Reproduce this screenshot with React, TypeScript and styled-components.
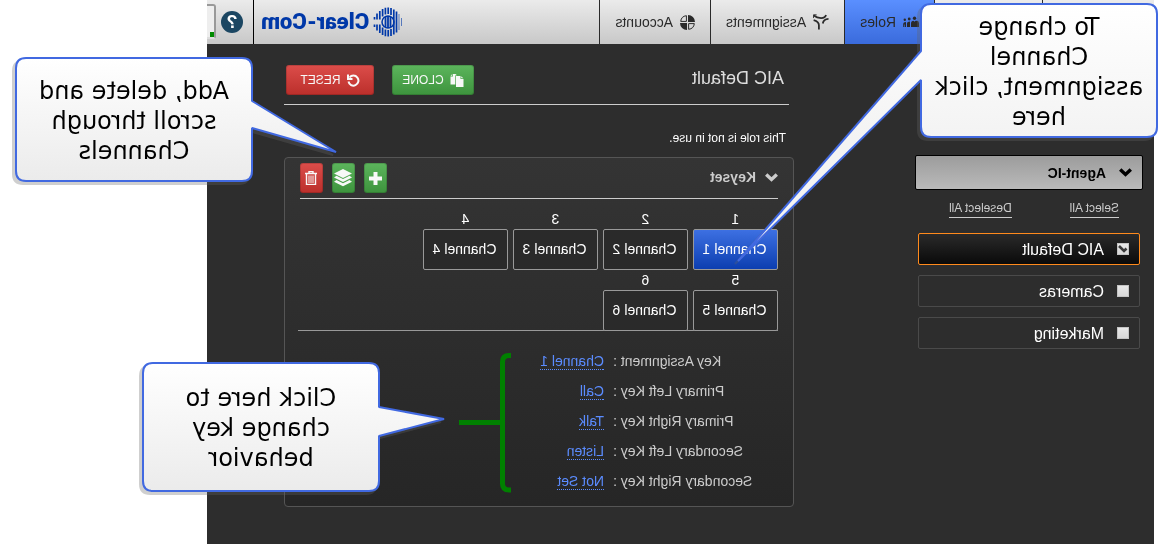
import React from "react";
import styled, { createGlobalStyle } from "styled-components";

const sans = `"Liberation Sans", Arial, sans-serif`;

const GlobalStyle = createGlobalStyle`
  * { box-sizing: border-box; }
  body { margin: 0; background: #fff; font-family: ${sans}; font-size: 14px; }
  button, input { font-family: inherit; }
`;

/* The whole page is shown mirrored, left to right. */
const Page = styled.div`
  transform: scaleX(-1);
  min-height: 100vh;
  padding: 0 207px 0 14px;
  overflow: hidden;
`;

const Shell = styled.div`
  position: relative;
  min-height: 100vh;
  background: #2d2d2d;
  color: #fff;
`;

const Header = styled.header`
  display: flex;
  height: 44px;
  background: linear-gradient(#ebebeb, #c8c8c8);
  overflow: hidden;
`;

const Nav = styled.nav`
  display: flex;
  flex: 1;
`;

const Tab = styled.a<{ $active?: boolean; $width: number }>`
  display: flex;
  align-items: center;
  gap: 7px;
  width: ${(p) => p.$width}px;
  padding: 0 15px;
  border-right: 1px solid #2a2a2a;
  background: ${(p) => (p.$active ? "linear-gradient(#5a8fff, #3a6bdc)" : "none")};
  color: #2a2a2a;
  text-decoration: none;
  white-space: nowrap;
`;

const Brand = styled.div`
  display: flex;
  align-items: center;
  gap: 4px;
  padding-right: 7px;
  color: #0038a8;
  font: 900 22px/44px Roboto, ${sans};
`;

const HelpArea = styled.div`
  display: flex;
  align-items: center;
  gap: 5px;
  width: 47px;
  padding-left: 10px;
  border-left: 1px solid #000;
  overflow: hidden;
`;

const HelpButton = styled.button`
  flex: none;
  width: 22px;
  height: 22px;
  padding: 0;
  border: 0;
  border-radius: 50%;
  background: #1b4662;
  color: #fff;
  font-size: 18px;
  font-weight: bold;
  line-height: 22px;
`;

const Meter = styled.div`
  flex: none;
  display: flex;
  align-items: flex-end;
  width: 30px;
  height: 35px;
  margin-bottom: 1px;
  border: 2px solid #999;
  border-bottom-color: #ddd;
  border-radius: 3px;
  background: #eee;
`;

const MeterBar = styled.span`
  width: 4px;
  height: 5px;
  background: #008a00;
`;

const Body = styled.div`
  display: flex;
  align-items: flex-start;
  gap: 121px;
  padding: 0 77px 37px 11px;
`;

const Sidebar = styled.aside`
  flex: none;
  width: 228px;
  padding-top: 111px;
`;

const GroupButton = styled.button`
  display: flex;
  align-items: center;
  gap: 13px;
  width: 100%;
  height: 35px;
  padding: 0 10px;
  border: 1px solid #000;
  border-radius: 2px;
  background: linear-gradient(#9c9c9c, #bababa);
  color: #000;
  font-size: 14px;
  font-weight: bold;
`;

const SelectLinks = styled.div`
  display: flex;
  justify-content: space-between;
  padding: 10px 34px 15px 24px;
`;

const SelectLink = styled.a`
  border-bottom: 1px solid #ccc;
  color: #ccc;
  font-size: 12px;
  line-height: 17px;
  text-decoration: none;
`;

const RoleList = styled.div`
  display: flex;
  flex-direction: column;
  gap: 10px;
  padding: 0 3px;
`;

const RoleItem = styled.label<{ $active?: boolean }>`
  display: flex;
  align-items: center;
  gap: 13px;
  height: 32px;
  padding: 1px 10px 0;
  border: 1px solid ${(p) => (p.$active ? "#ff8a1c" : "#4a4a4a")};
  border-radius: 2px;
  background: ${(p) => (p.$active ? "linear-gradient(#2a2a2a, #0a0a0a)" : "none")};
  font-size: 16px;
`;

const Box = styled.span`
  display: grid;
  place-items: center;
  width: 12px;
  height: 12px;
  margin-bottom: 2px;
  border: 1px solid #c4c4c4;
  background: linear-gradient(#e8e8e8, #d8d8d8);
  color: #3a3a3a;

  & > * { grid-area: 1 / 1; }
`;

const Tick = styled.input`
  appearance: none;
  width: 10px;
  height: 10px;
  margin: 0;
`;

const Main = styled.main`
  flex: 1;
  min-width: 0;
`;

const TitleBar = styled.div`
  display: flex;
  align-items: center;
  gap: 18px;
  height: 61px;
  margin-left: 5px;
  padding: 12px 2px 0 5px;
  border-bottom: 1px solid #ccc;
`;

const Title = styled.h1`
  flex: 1;
  margin: 0;
  padding-bottom: 4px;
  color: #ddd;
  font-size: 18px;
  font-weight: normal;
  line-height: 24px;
`;

const gradients = {
  green: "linear-gradient(#5cb55c, #3d933d)",
  red: "linear-gradient(#dc4d4a, #bb2f2b)",
};

const ActionButton = styled.button<{ $tone: keyof typeof gradients; $width: number }>`
  display: flex;
  align-items: center;
  justify-content: center;
  gap: 6px;
  width: ${(p) => p.$width}px;
  height: 30px;
  padding: 0;
  border: 1px solid rgba(0, 0, 0, 0.15);
  border-radius: 3px;
  background: ${(p) => gradients[p.$tone]} border-box;
  color: #f8f8f8;
  font-size: 12px;
`;

const Note = styled.p`
  margin: 0;
  padding: 25px 8px 11px;
  font-size: 12px;
  line-height: 16px;
`;

const Panel = styled.section`
  height: 350px;
  padding: 5px 15px;
  border: 1px solid #555;
  border-radius: 4px;
  background: linear-gradient(#343434, #262626);
`;

const PanelHead = styled.div`
  display: flex;
  align-items: flex-start;
  gap: 9px;
  height: 36px;
  border-bottom: 1px solid #ccc;
`;

const PanelTitle = styled.h2`
  display: flex;
  flex: 1;
  align-items: center;
  gap: 9px;
  margin: 0;
  color: #ccc;
  font-size: 14px;
  line-height: 28px;
`;

const Keys = styled.div`
  display: grid;
  grid-template-columns: repeat(4, 85px);
  column-gap: 5px;
  margin-right: -2px;
  padding-top: 10px;
  border-bottom: 1px solid #999;
`;

const KeyCell = styled.div`
  display: flex;
  flex-direction: column;

  &:nth-child(n + 5) { margin-bottom: -1px; }
`;

const KeyNumber = styled.span`
  padding-left: 4px;
  line-height: 20px;
  text-align: center;
`;

const KeyButton = styled.button<{ $active?: boolean }>`
  height: 41px;
  padding: 0 0 2px 2px;
  border: 1px solid #999;
  border-radius: 2px;
  background: ${(p) => (p.$active ? "linear-gradient(#3d70e2, #0c3eb0)" : "#2a2a2a")};
  color: #fff;
  font-size: 14px;
`;

const Settings = styled.dl`
  display: grid;
  grid-template-columns: 165px 1fr;
  grid-auto-rows: 18px;
  gap: 12px 9px;
  margin: 0;
  padding-top: 21px;
  line-height: 18px;
`;

const Term = styled.dt`
  color: #ccc;
  text-align: right;
`;

const Value = styled.dd`
  margin: 0;
`;

const ValueLink = styled.a`
  display: inline-block;
  height: 18px;
  border-bottom: 1px dotted #5b8cff;
  color: #5b8cff;
  text-decoration: none;
`;

/* Callouts and the bracket lie over the page at free positions. */
const Balloon = styled.aside<{ $x: number; $y: number; $h: number }>`
  position: absolute;
  left: ${(p) => p.$x}px;
  top: ${(p) => p.$y}px;
  display: flex;
  align-items: center;
  justify-content: center;
  width: 238px;
  height: ${(p) => p.$h}px;
  padding-top: 2px;
  color: #000;
  font: 24px/30px "DejaVu Sans", Verdana, sans-serif;
  text-align: center;
`;

const BalloonShape = styled.svg`
  position: absolute;
  inset: 0;
  width: 100%;
  height: 100%;
  overflow: visible;
  filter: drop-shadow(3px 3px 0 rgba(100, 100, 100, 0.31));
`;

const BalloonText = styled.p`
  position: relative;
  margin: 0;
  white-space: pre-line;
`;

const Bracket = styled.svg`
  position: absolute;
  left: 643px;
  top: 352px;
`;

type Pt = [number, number];

function Callout(props: {
  id: string; x: number; y: number; h: number; side: "left" | "right";
  from: number; to: number; tip: Pt; end: string; children: string;
}) {
  const { id, h, side, from, to, tip } = props;
  const r = 237, b = h - 1;
  const right = side === "right" ? `V${from} L${tip[0]} ${tip[1]} L${r} ${to}` : "";
  const left = side === "left" ? `V${to} L${tip[0]} ${tip[1]} L1 ${from}` : "";
  const d = `M11 1 H${r - 10} Q${r} 1 ${r} 11 ${right} V${b - 10} Q${r} ${b} ${r - 10} ${b} H11 Q1 ${b} 1 ${b - 10} ${left} V11 Q1 1 11 1 Z`;
  return (
    <Balloon $x={props.x} $y={props.y} $h={h}>
      <BalloonShape aria-hidden="true">
        <defs>
          <linearGradient id={id} gradientUnits="userSpaceOnUse" x1="0" y1="0" x2="0" y2={h}>
            <stop offset="0" stopColor="#fff" />
            <stop offset="1" stopColor={props.end} />
          </linearGradient>
        </defs>
        <path d={d} fill={`url(#${id})`} stroke="#4169e1" strokeWidth="2" strokeLinejoin="bevel" />
      </BalloonShape>
      <BalloonText>{props.children}</BalloonText>
    </Balloon>
  );
}

const Chevron = () => (
  <svg width="13" height="9" viewBox="0 0 13 9" fill="none" stroke="currentColor" strokeWidth="3.4">
    <path d="M1.200 1.500L6.500 6.500L11.800 1.500" />
  </svg>
);

const PlusIcon = () => (
  <svg width="13" height="13" viewBox="0 0 13 13" stroke="currentColor" strokeWidth="4">
    <path d="M6.500 0v13M0 6.500h13" />
  </svg>
);

const CheckIcon = () => (
  <svg width="10" height="10" viewBox="0 0 10 10" fill="none" stroke="currentColor" strokeWidth="2.600">
    <path d="M1.500 4.500L4 7L9 2" />
  </svg>
);

const RolesIcon = () => (
  <svg width="16" height="12" viewBox="0 0 16 12" fill="currentColor">
    <circle cx="4.500" cy="2.200" r="1.700" /><circle cx="9.800" cy="3" r="1.400" /><circle cx="14.200" cy="3.800" r="1.200" />
    <path d="M0 11V7.500q0-2.500 2-2.700l1.500 0 1 1 1-1q2.500 0 2.500 2.700V11zM9 11V5.500q3 0 3 2V11zM13 11V6q2.800 0 2.800 1.800V11h-1V8.500h-.6V11z" />
  </svg>
);

const AssignIcon = () => (
  <svg width="16" height="16" viewBox="0 0 16 16" fill="none" stroke="currentColor" strokeWidth="1.800">
    <path d="M.5 4.800Q5.500 5 6.300 9.500M3 1Q3.800 4 8 4T15.500 1.500M10.200 15.500V11.500Q10 7.500 15.500 6" />
    <path d="M12.500.8H15.800V4" strokeWidth="1" />
  </svg>
);

const AccountsIcon = () => (
  <svg width="15" height="15" viewBox="0 0 15 15">
    <path d="M7 0v7H0A7 7 0 0 1 7 0zM8 15V8h7a7 7 0 0 1-7 7z" fill="currentColor" />
    <path d="M8.600 6.400V.7a6.400 6.400 0 0 1 5.700 5.700zM6.400 8.600v5.700A6.400 6.400 0 0 1 .7 8.600z" fill="none" stroke="currentColor" />
  </svg>
);

const GlobeIcon = () => (
  <svg width="30" height="30" viewBox="0 0 30 30" fill="none" stroke="currentColor">
    <path d="M1.500 11v8M4 7v16" strokeWidth="1" opacity=".6" />
    <path d="M6.500 4.500v21M9.200 2.500v25M12 1v7M12 22v7M14.800.5v6.500M14.800 23v6.500M17.600.8v6.800M17.600 22.400v6.800M20.400 2v7.500M20.400 20.500V28M23.200 4v8.500M23.200 17.500V26M26 6.500v6M26 17.500v6M28.500 10v2.500M28.500 17.500V20" strokeWidth="1.700" />
    <circle cx="15" cy="15" r="6" strokeWidth="1.500" />
    <path d="M12.500 10v10M15 9v12M17.500 10v10" strokeWidth="1.800" />
  </svg>
);

const CloneIcon = () => (
  <svg width="14" height="13" viewBox="0 0 14 13" fill="currentColor">
    <path d="M3.500 2H8V13H.5V5H3.500zM2.800 2.200V4.300H.7zM8.500 0H11V2.500H13.500V10.500H8.700V1.300H7zM11.700 0L13.500 1.800H11.700z" />
  </svg>
);

const ResetIcon = () => (
  <svg width="13" height="13" viewBox="0 0 13 13" fill="none" stroke="currentColor" strokeWidth="2">
    <path d="M10.500 3.500A5 5 0 1 0 11.500 7.500M12 .5V5H7.500" />
  </svg>
);

const LayersIcon = () => (
  <svg width="18" height="18" viewBox="0 0 18 18" fill="currentColor">
    <path d="M9 0l9 4.500L9 9 0 4.500zM2.500 6.700L9 10l6.500-3.300L18 8.500 9 13 0 8.500zM2.500 10.900L9 14.200l6.500-3.300L18 12.700 9 17.200 0 12.700z" />
  </svg>
);

const TrashIcon = () => (
  <svg width="12" height="14" viewBox="0 0 12 14" fill="none" stroke="currentColor">
    <path d="M0 2.500h12M4 2V.5h4V2M1.500 3v10.500h9V3" strokeWidth="1.400" />
    <path d="M4 4.500v7.500M6 4.500v7.500M8 4.500v7.500" />
  </svg>
);

const roles = ["AIC Default", "Cameras", "Marketing"];
const channels = [1, 2, 3, 4, 5, 6];
const settings = [
  ["Key Assignment", "Channel 1"],
  ["Primary Left Key", "Call"],
  ["Primary Right Key", "Talk"],
  ["Secondary Left Key", "Listen"],
  ["Secondary Right Key", "Not Set"],
];

export default function App() {
  return (
    <Page>
      <GlobalStyle />
      <Shell>
        <Header>
          <Nav>
            <Tab $width={112} />
            <Tab $width={108} />
            <Tab href="#roles" $active $width={90}><RolesIcon />Roles</Tab>
            <Tab href="#assignments" $width={134}><AssignIcon />Assignments</Tab>
            <Tab href="#accounts" $width={111}><AccountsIcon />Accounts</Tab>
          </Nav>
          <Brand><GlobeIcon />Clear-Com</Brand>
          <HelpArea>
            <HelpButton>?</HelpButton>
            <Meter><MeterBar /></Meter>
          </HelpArea>
        </Header>
        <Body>
          <Sidebar>
            <GroupButton><Chevron />Agent-IC</GroupButton>
            <SelectLinks>
              <SelectLink href="#all">Select All</SelectLink>
              <SelectLink href="#none">Deselect All</SelectLink>
            </SelectLinks>
            <RoleList>
              {roles.map((role, i) => (
                <RoleItem key={role} $active={i === 0}>
                  <Box>
                    <Tick type="checkbox" defaultChecked={i === 0} />
                    {i === 0 && <CheckIcon />}
                  </Box>
                  {role}
                </RoleItem>
              ))}
            </RoleList>
          </Sidebar>
          <Main>
            <TitleBar>
              <Title>AIC Default</Title>
              <ActionButton $tone="green" $width={82}><CloneIcon />CLONE</ActionButton>
              <ActionButton $tone="red" $width={88}><ResetIcon />RESET</ActionButton>
            </TitleBar>
            <Note>This role is not in use.</Note>
            <Panel>
              <PanelHead>
                <PanelTitle><Chevron />Keyset</PanelTitle>
                <ActionButton $tone="green" $width={23} aria-label="Add"><PlusIcon /></ActionButton>
                <ActionButton $tone="green" $width={23} aria-label="Layers"><LayersIcon /></ActionButton>
                <ActionButton $tone="red" $width={23} aria-label="Delete"><TrashIcon /></ActionButton>
              </PanelHead>
              <Keys>
                {channels.map((n) => (
                  <KeyCell key={n}>
                    <KeyNumber>{n}&nbsp;</KeyNumber>
                    <KeyButton $active={n === 1}>Channel {n}</KeyButton>
                  </KeyCell>
                ))}
              </Keys>
              <Settings>
                {settings.map(([label, value]) => (
                  <React.Fragment key={label}>
                    <Term>{label} :</Term>
                    <Value><ValueLink href="#edit">{value}</ValueLink></Value>
                  </React.Fragment>
                ))}
              </Settings>
            </Panel>
          </Main>
        </Body>
        <Bracket width="53" height="142" fill="none" stroke="#008000" strokeWidth="5" aria-hidden="true">
          <path d="M0 3.500H2Q8.500 3.500 8.500 10V131.500Q8.500 138 2 138H0M8.500 70.500H52" />
        </Bracket>
        <Callout id="c1" x={-4} y={3} h={135} side="right" from={48} to={77} tip={[420, 258]} end="#f3f3f3">
          {"To change\nChannel\nassignment, click\nhere"}
        </Callout>
        <Callout id="c2" x={901} y={57} h={125} side="left" from={44} to={71} tip={[-83, 95]} end="#ebebeb">
          {"Add, delete and\nscroll through\nChannels"}
        </Callout>
        <Callout id="c3" x={774} y={362} h={130} side="left" from={45} to={74} tip={[-64, 57]} end="#ebebeb">
          {"Click here to\nchange key\nbehavior"}
        </Callout>
      </Shell>
    </Page>
  );
}
